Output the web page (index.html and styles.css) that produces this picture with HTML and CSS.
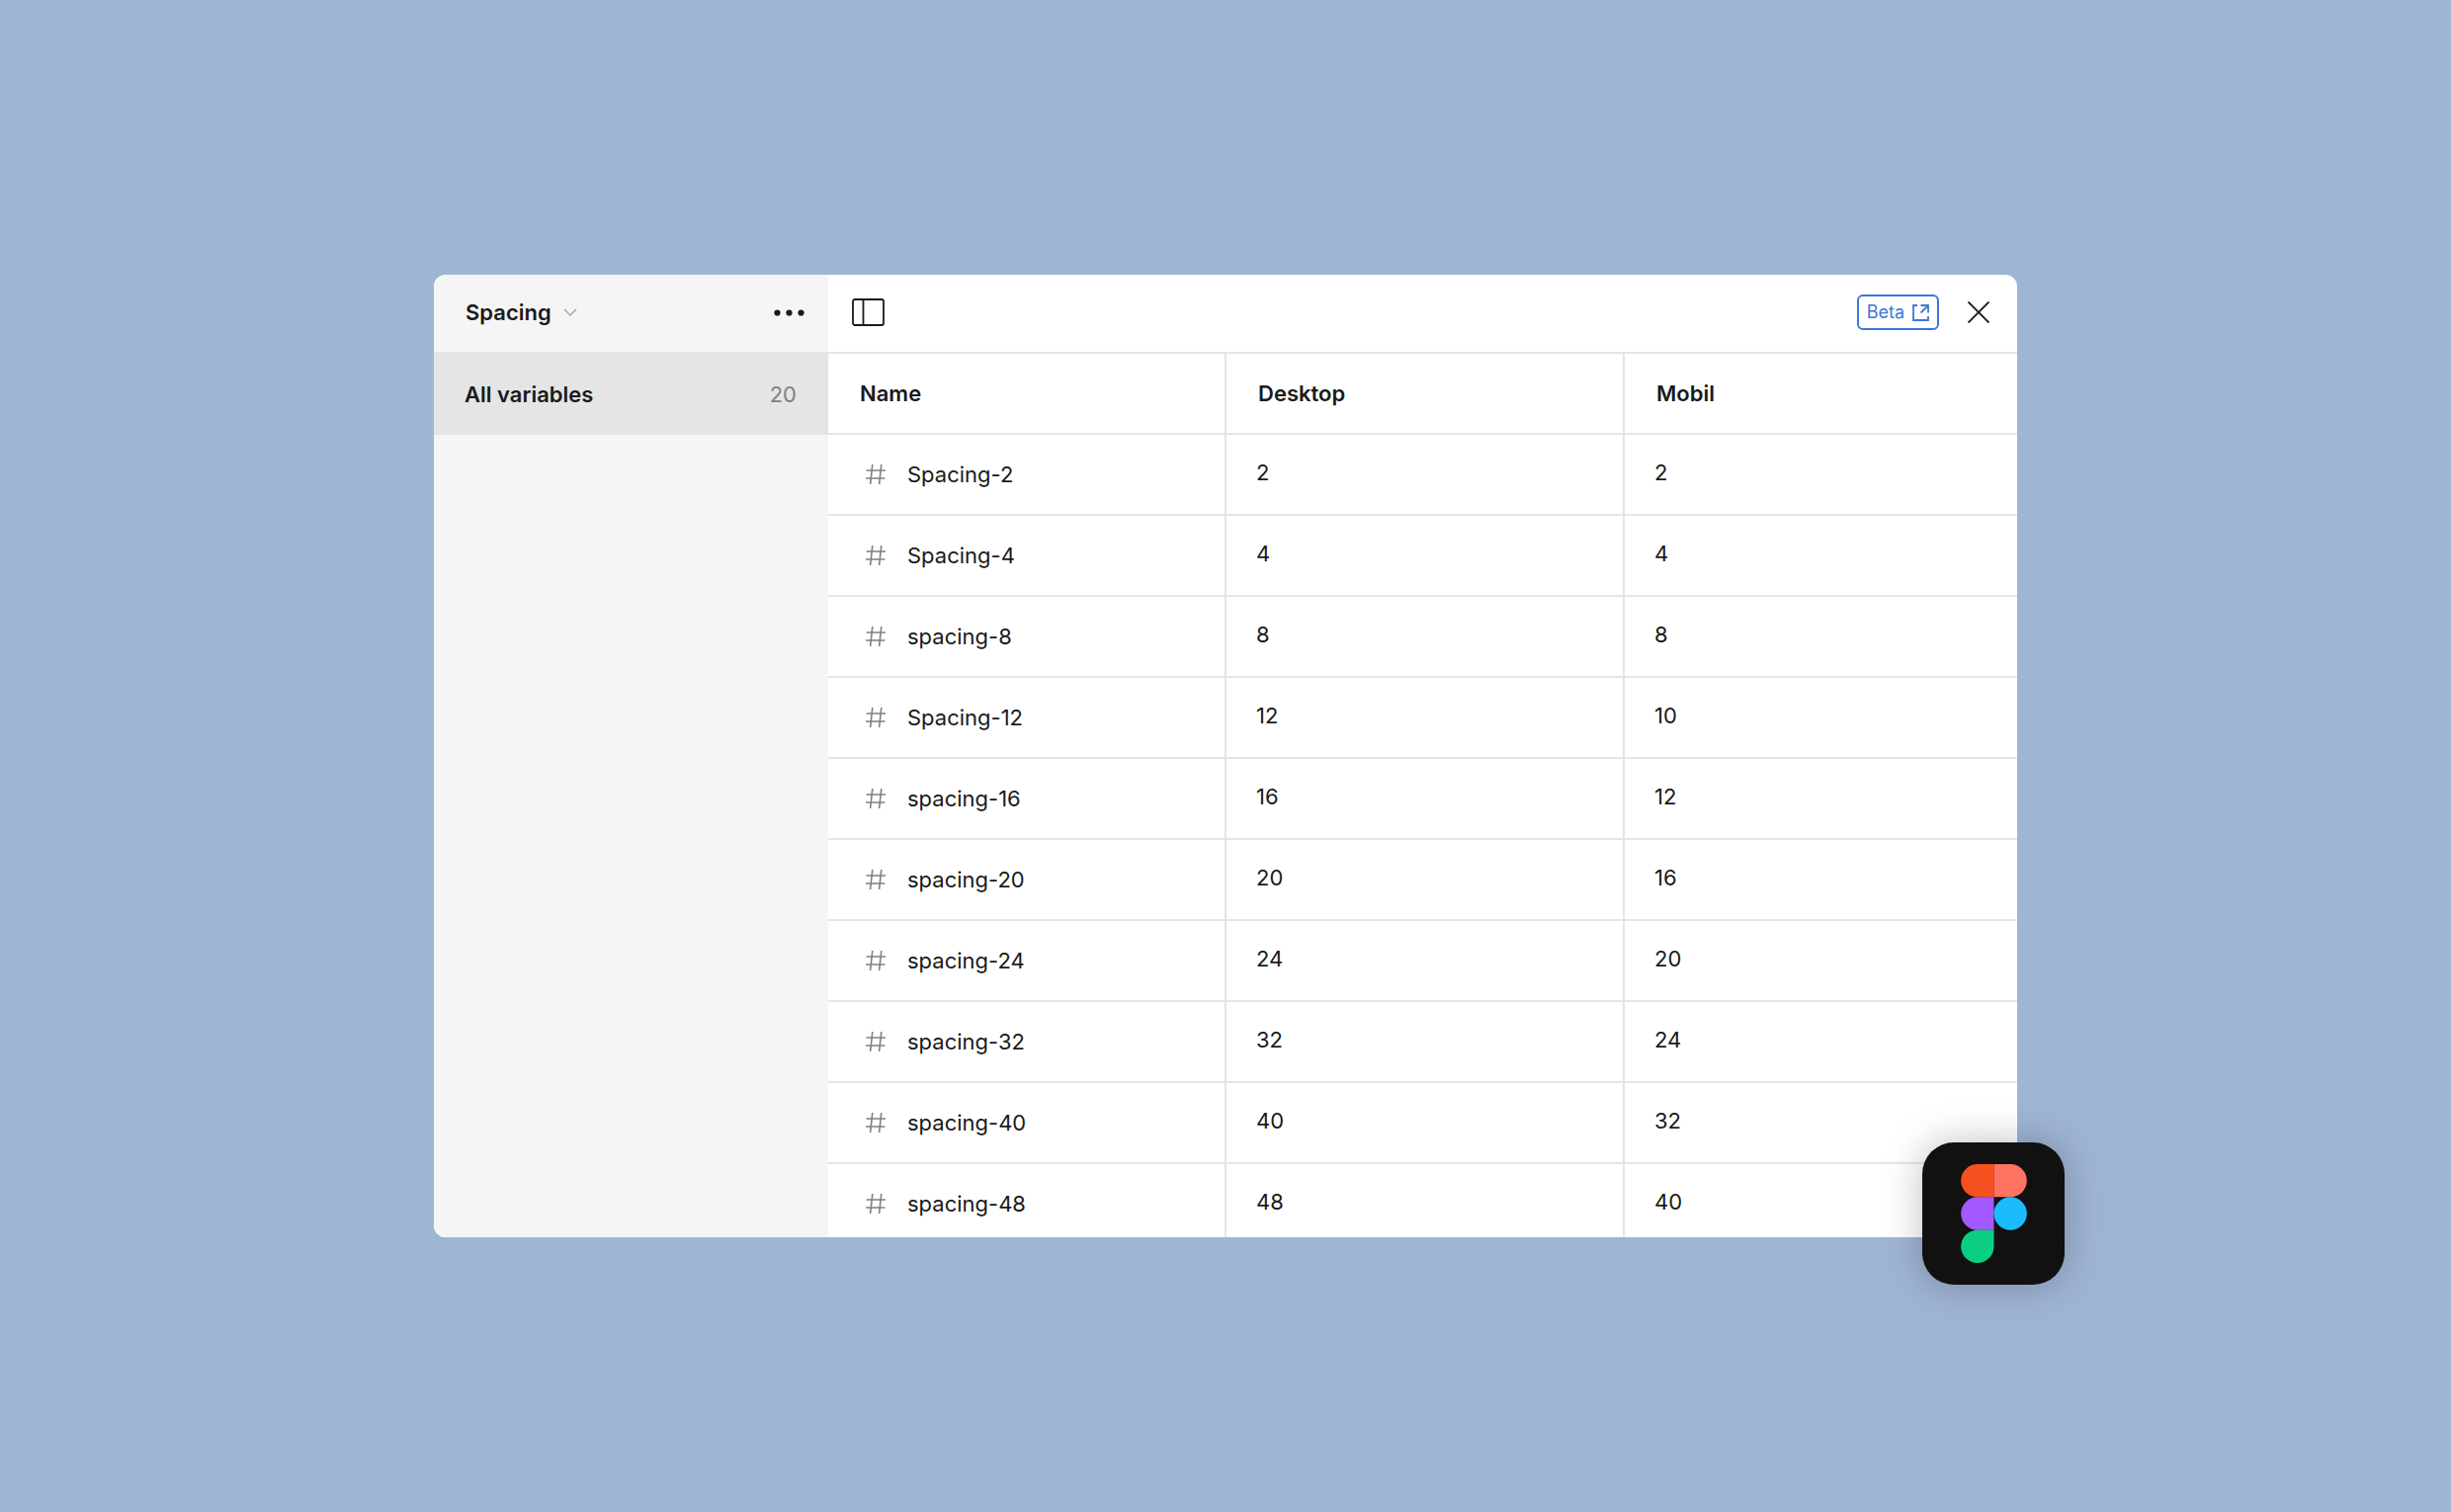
FILE: index.html
```html
<!DOCTYPE html>
<html lang="en">

<head>
    <meta charset="UTF-8">
    <meta name="viewport" content="width=device-width, initial-scale=1.0">
    <title>Spacing variables</title>
    <link rel="stylesheet" href="styles.css">
</head>

<body>
    <!-- Shared icon for number variables -->
    <svg class="sprite" aria-hidden="true">
        <symbol id="hash" viewBox="0 0 20 20">
            <path d="M6.8 0L4.6 20M15.8 0L13.6 20M0.6 6H20M0 14H19.4" fill="none" stroke="currentColor" stroke-width="1.6" />
        </symbol>
    </svg>

    <main class="stage">
        <div class="window">
            <aside class="sidebar">
                <div class="sidebar-header">
                    <label class="collection">
                        <select class="collection-select" aria-label="Collection">
                            <option>Spacing</option>
                        </select>
                        <svg class="chevron" width="14" height="8" viewBox="0 0 14 8" aria-hidden="true">
                            <path d="M1 1L7 7L13 1" fill="none" stroke="currentColor" stroke-width="1.5" />
                        </svg>
                    </label>
                    <button class="icon-button" type="button" aria-label="More options">
                        <svg width="31" height="7" viewBox="0 0 31 7">
                            <circle cx="3.5" cy="3.5" r="3.1" />
                            <circle cx="15.5" cy="3.5" r="3.1" />
                            <circle cx="27.5" cy="3.5" r="3.1" />
                        </svg>
                    </button>
                </div>
                <button class="group" type="button">
                    <span>All variables</span>
                    <span class="group-count">20</span>
                </button>
            </aside>

            <section class="content">
                <header class="toolbar">
                    <button class="icon-button" type="button" aria-label="Toggle sidebar">
                        <svg width="33" height="28" viewBox="0 0 33 28" fill="none" stroke="currentColor" stroke-width="1.8">
                            <rect x="1" y="1" width="31" height="26" rx="2" />
                            <path d="M11.5 1V27" />
                        </svg>
                    </button>
                    <div class="toolbar-actions">
                        <a class="beta" href="#">
                            Beta
                            <svg width="17" height="17" viewBox="0 0 17 17" fill="none" stroke="currentColor" stroke-width="1.8">
                                <path d="M5 1H1V16H16V12M8.5 1H16V8.5M16 1L8.5 8.5" />
                            </svg>
                        </a>
                        <button class="icon-button" type="button" aria-label="Close">
                            <svg width="22" height="22" viewBox="0 0 22 22" fill="none" stroke="currentColor" stroke-width="1.9">
                                <path d="M0.5 0.5L21.5 21.5M21.5 0.5L0.5 21.5" />
                            </svg>
                        </button>
                    </div>
                </header>

                <table class="variables">
                    <thead>
                        <tr>
                            <th scope="col">Name</th>
                            <th scope="col">Desktop</th>
                            <th scope="col">Mobil</th>
                        </tr>
                    </thead>
                    <tbody>
                        <tr>
                            <td><div class="name"><svg class="hash"><use href="#hash" /></svg>Spacing-2</div></td>
                            <td>2</td>
                            <td>2</td>
                        </tr>
                        <tr>
                            <td><div class="name"><svg class="hash"><use href="#hash" /></svg>Spacing-4</div></td>
                            <td>4</td>
                            <td>4</td>
                        </tr>
                        <tr>
                            <td><div class="name"><svg class="hash"><use href="#hash" /></svg>spacing-8</div></td>
                            <td>8</td>
                            <td>8</td>
                        </tr>
                        <tr>
                            <td><div class="name"><svg class="hash"><use href="#hash" /></svg>Spacing-12</div></td>
                            <td>12</td>
                            <td>10</td>
                        </tr>
                        <tr>
                            <td><div class="name"><svg class="hash"><use href="#hash" /></svg>spacing-16</div></td>
                            <td>16</td>
                            <td>12</td>
                        </tr>
                        <tr>
                            <td><div class="name"><svg class="hash"><use href="#hash" /></svg>spacing-20</div></td>
                            <td>20</td>
                            <td>16</td>
                        </tr>
                        <tr>
                            <td><div class="name"><svg class="hash"><use href="#hash" /></svg>spacing-24</div></td>
                            <td>24</td>
                            <td>20</td>
                        </tr>
                        <tr>
                            <td><div class="name"><svg class="hash"><use href="#hash" /></svg>spacing-32</div></td>
                            <td>32</td>
                            <td>24</td>
                        </tr>
                        <tr>
                            <td><div class="name"><svg class="hash"><use href="#hash" /></svg>spacing-40</div></td>
                            <td>40</td>
                            <td>32</td>
                        </tr>
                        <tr>
                            <td><div class="name"><svg class="hash"><use href="#hash" /></svg>spacing-48</div></td>
                            <td>48</td>
                            <td>40</td>
                        </tr>
                    </tbody>
                </table>
            </section>
        </div>

        <div class="app-badge">
            <svg width="67" height="100" viewBox="0 0 200 300" role="img" aria-label="Figma">
                <path d="M100 0H50a50 50 0 0 0 0 100h50z" fill="#f4511e" />
                <path d="M100 0h50a50 50 0 0 1 0 100h-50z" fill="#ff7262" />
                <path d="M100 100H50a50 50 0 0 0 0 100h50z" fill="#a259ff" />
                <circle cx="150" cy="150" r="50" fill="#1abcfe" />
                <path d="M50 200h50v50a50 50 0 1 1-50-50z" fill="#0acf83" />
            </svg>
        </div>
    </main>
</body>

</html>
```

FILE: styles.css
```css
* {
    box-sizing: border-box;
}

body {
    margin: 0;
    min-height: 100vh;
    display: flex;
    align-items: center;
    justify-content: center;
    background: #9fb5d4;
    font-family: Inter, sans-serif;
    font-size: 22px;
    line-height: 28px;
    color: #1a1a1a;
}

.sprite {
    position: absolute;
    width: 0;
    height: 0;
}

.stage {
    position: relative;
    width: 90%;
    max-width: 1602px;
}

.window {
    display: flex;
    max-height: 974px;
    overflow: hidden;
    border-radius: 12px;
    background: #fff;
}

button,
select {
    padding: 0;
    border: 0;
    background: none;
    font: inherit;
    color: inherit;
    cursor: pointer;
}

svg {
    display: block;
    flex-shrink: 0;
}

.icon-button {
    display: flex;
}

.icon-button circle {
    fill: currentColor;
}

/* Sidebar */
.sidebar {
    flex: 0 0 399px;
    background: #f5f5f5;
}

.sidebar-header {
    display: flex;
    align-items: center;
    justify-content: space-between;
    height: 78px;
    padding: 0 24px 2px 32px;
}

.collection {
    display: flex;
    align-items: center;
    gap: 12px;
}

.collection-select {
    appearance: none;
    font-weight: 600;
}

.chevron {
    color: #aaa;
}

.group {
    display: flex;
    align-items: center;
    justify-content: space-between;
    width: 100%;
    height: 84px;
    padding: 2px 32px 0 31px;
    background: #e5e5e5;
    font-weight: 600;
}

.group-count {
    font-weight: 400;
    color: #808080;
}

/* Main panel */
.content {
    flex: 1;
    min-width: 0;
}

.toolbar {
    display: flex;
    align-items: center;
    justify-content: space-between;
    height: 80px;
    padding: 0 28px 2px 24px;
    border-bottom: 2px solid #e5e5e5;
}

.toolbar-actions {
    display: flex;
    align-items: center;
    gap: 29px;
}

.beta {
    display: flex;
    align-items: center;
    gap: 8px;
    height: 36px;
    padding: 0 8px;
    border: 2px solid #3b78d8;
    border-radius: 6px;
    font-size: 18px;
    color: #3b78d8;
    text-decoration: none;
}

.variables {
    width: 100%;
    table-layout: fixed;
    border-spacing: 0;
}

.variables th,
.variables td {
    height: 82px;
    padding: 0 32px;
    border-bottom: 2px solid #e5e5e5;
    text-align: left;
    vertical-align: middle;
}

.variables th {
    font-weight: 600;
}

.variables td {
    padding: 0 30px 4px;
}

.variables td:first-child {
    padding: 0 38px;
}

.variables th:not(:last-child),
.variables td:not(:last-child) {
    border-right: 2px solid #e5e5e5;
}

.variables th:first-child,
.variables th:nth-child(2) {
    width: 403px;
}

.name {
    display: flex;
    align-items: center;
    gap: 22px;
}

.hash {
    width: 20px;
    height: 20px;
    color: #808080;
}

/* App icon hanging off the corner of the window */
.app-badge {
    position: absolute;
    right: -48px;
    bottom: -48px;
    display: flex;
    align-items: center;
    justify-content: center;
    width: 144px;
    height: 144px;
    border-radius: 32px;
    background: #111;
    box-shadow: 0 0 40px rgba(0, 0, 0, 0.25);
}
```
